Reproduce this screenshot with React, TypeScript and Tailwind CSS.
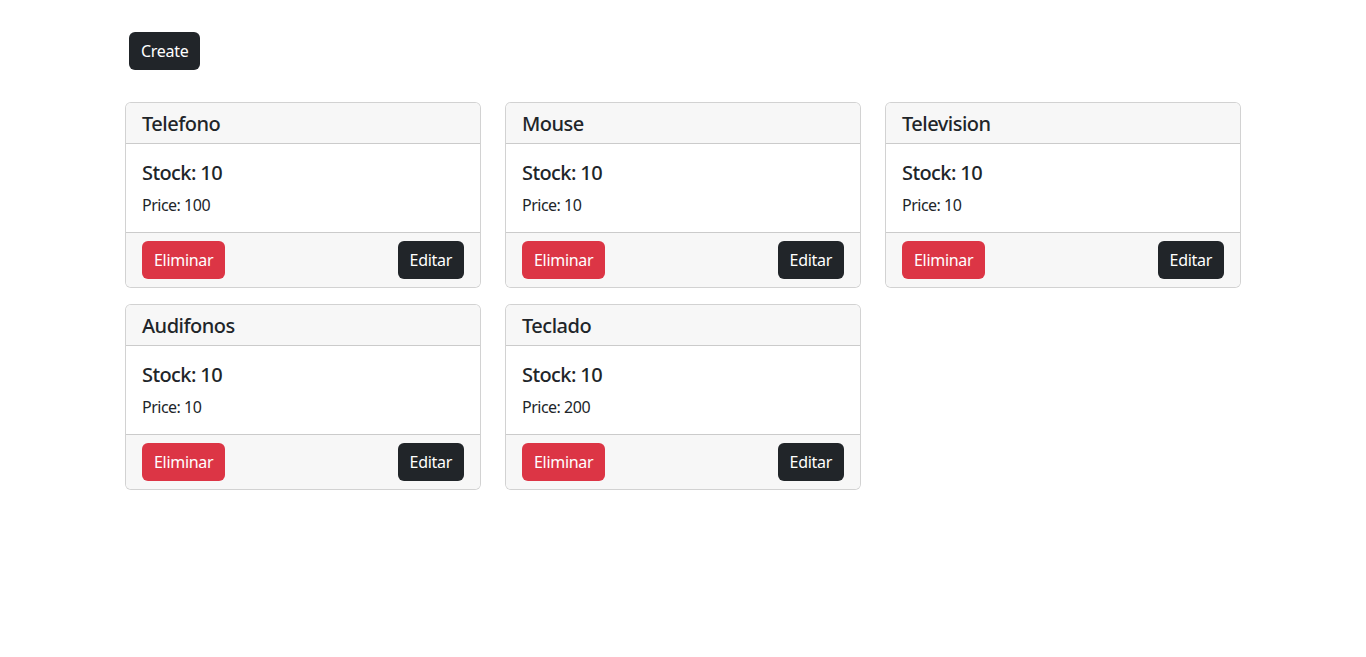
import React from 'react';

const products = [
  { name: 'Telefono', stock: 10, price: 100 },
  { name: 'Mouse', stock: 10, price: 10 },
  { name: 'Television', stock: 10, price: 10 },
  { name: 'Audifonos', stock: 10, price: 10 },
  { name: 'Teclado', stock: 10, price: 200 },
];

const ProductCard: React.FC<{ name: string; stock: number; price: number }> = ({ name, stock, price }) => (
  <div className="border border-black/[0.175] rounded-md bg-white overflow-hidden">
    {/* Header */}
    <div className="bg-[#f7f7f7] border-b border-black/[0.175] px-4 pt-[9px] pb-[7px]">
      <h5 className="text-[20px] leading-6 font-medium tracking-[-0.5px]">{name}</h5>
    </div>

    {/* Body */}
    <div className="px-4 pt-[17px] pb-[15px]">
      <h5 className="text-[20px] leading-6 font-medium mb-2 tracking-[-0.6px]">Stock: {stock}</h5>
      <p className="text-[16px] leading-6 tracking-[-0.5px]">Price: {price}</p>
    </div>

    {/* Footer */}
    <div className="bg-[#f7f7f7] border-t border-black/[0.175] px-4 py-2 flex justify-between">
      <button className="h-[38px] px-3 rounded-md bg-[#dc3545] text-white text-base tracking-[-0.3px]">Eliminar</button>
      <button className="h-[38px] px-3 rounded-md bg-[#212529] text-white text-base tracking-[-0.3px]">Editar</button>
    </div>
  </div>
);

export default function App() {
  return (
    <div className="min-h-[657px] bg-white text-[#212529] font-['Noto_Sans',sans-serif]">
      <div className="w-[1140px] mx-auto px-3 pt-8">
        <button className="ml-1 h-[38px] px-3 rounded-md bg-[#212529] text-white text-base tracking-[-0.3px]">Create</button>

        <div className="mt-8 grid grid-cols-3 gap-x-6 gap-y-4">
          {products.map((p) => (
            <ProductCard key={p.name} {...p} />
          ))}
        </div>
      </div>
    </div>
  );
}
